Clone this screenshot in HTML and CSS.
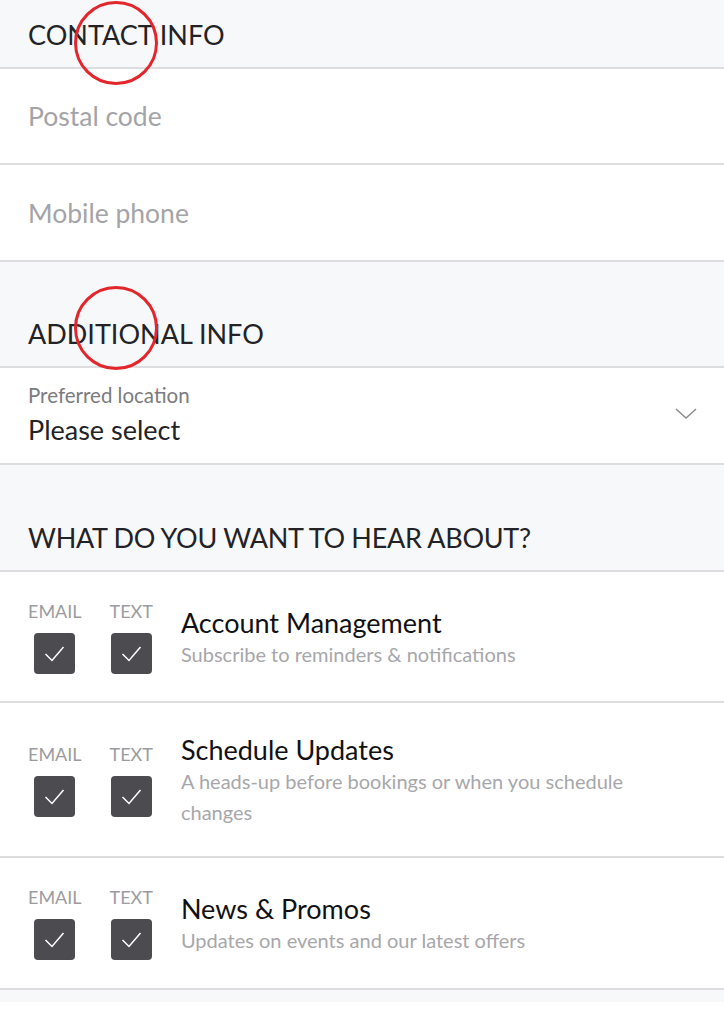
FILE: index.html
```html
<!DOCTYPE html>
<html lang="en">
<head>
    <meta charset="UTF-8">
    <meta name="viewport" content="width=device-width, initial-scale=1.0">
    <title>Profile - Contact preferences</title>
    <link rel="stylesheet" href="styles.css">
</head>
<body>
    <main class="form">
        <div class="section-title first">
            <h2>CONTACT INFO</h2>
            <span class="mark"></span>
        </div>
        <div class="field">
            <input type="text" placeholder="Postal code">
        </div>
        <div class="field tall">
            <input type="text" placeholder="Mobile phone">
        </div>

        <div class="section-title">
            <h2>ADDITIONAL INFO</h2>
            <span class="mark"></span>
        </div>
        <div class="field select">
            <div>
                <label>Preferred location</label>
                <div class="value">Please select</div>
            </div>
            <svg class="chevron" width="22" height="12" viewBox="0 0 22 12">
                <path d="M1 1 L11 10 L21 1" fill="none" stroke="#8a8a8e" stroke-width="1.4"/>
            </svg>
        </div>

        <div class="section-title wide">
            <h2>WHAT DO YOU WANT TO HEAR ABOUT?</h2>
        </div>

        <!-- subscription rows -->
        <div class="pref">
            <div class="checks">
                <div class="check-col">
                    <span>EMAIL</span>
                    <div class="box"><svg viewBox="0 0 41 41"><path d="M11.5 21 L18 27.5 L29.5 14"/></svg></div>
                </div>
                <div class="check-col">
                    <span>TEXT</span>
                    <div class="box"><svg viewBox="0 0 41 41"><path d="M11.5 21 L18 27.5 L29.5 14"/></svg></div>
                </div>
            </div>
            <div class="pref-text">
                <h3>Account Management</h3>
                <p>Subscribe to reminders &amp; notifications</p>
            </div>
        </div>
        <div class="pref">
            <div class="checks">
                <div class="check-col">
                    <span>EMAIL</span>
                    <div class="box"><svg viewBox="0 0 41 41"><path d="M11.5 21 L18 27.5 L29.5 14"/></svg></div>
                </div>
                <div class="check-col">
                    <span>TEXT</span>
                    <div class="box"><svg viewBox="0 0 41 41"><path d="M11.5 21 L18 27.5 L29.5 14"/></svg></div>
                </div>
            </div>
            <div class="pref-text">
                <h3>Schedule Updates</h3>
                <p>A heads-up before bookings or when you schedule changes</p>
            </div>
        </div>
        <div class="pref last">
            <div class="checks">
                <div class="check-col">
                    <span>EMAIL</span>
                    <div class="box"><svg viewBox="0 0 41 41"><path d="M11.5 21 L18 27.5 L29.5 14"/></svg></div>
                </div>
                <div class="check-col">
                    <span>TEXT</span>
                    <div class="box"><svg viewBox="0 0 41 41"><path d="M11.5 21 L18 27.5 L29.5 14"/></svg></div>
                </div>
            </div>
            <div class="pref-text">
                <h3>News &amp; Promos</h3>
                <p>Updates on events and our latest offers</p>
            </div>
        </div>
        <div class="bottom-band"></div>
    </main>
</body>
</html>
```

FILE: styles.css
```css
* {
    margin: 0;
    padding: 0;
    box-sizing: border-box;
}

body {
    font-family: Lato, "Open Sans", sans-serif;
    background: white;
    color: #222226;
}

.form {
    display: flex;
    flex-direction: column;
}

.section-title {
    position: relative;
    background: #f7f8fa;
    padding: 55px 28px 15px;
    border-bottom: 2px solid #dddde0;
}

.section-title.first {
    padding: 18px 28px 15px;
}

.section-title.wide {
    padding-top: 56px;
}

.section-title h2 {
    font-size: 27px;
    font-weight: 400;
    line-height: 34px;
    color: #232327;
}

.section-title.wide h2 {
    letter-spacing: -0.3px;
}

/* red annotation ring over the heading */
.mark {
    position: absolute;
    left: 74px;
    bottom: -4px;
    width: 84px;
    height: 84px;
    border: 3px solid #e3262b;
    border-radius: 50%;
}

.section-title.first .mark {
    top: 1px;
    bottom: auto;
}

.field {
    display: flex;
    align-items: center;
    justify-content: space-between;
    height: 96px;
    padding: 0 28px;
    border-bottom: 2px solid #dddde0;
    background: white;
}

.field.tall {
    height: 97px;
}

.field input {
    border: none;
    outline: none;
    background: none;
    width: 100%;
    font-family: Lato, sans-serif;
    font-size: 26.5px;
    color: #222;
}

.field input::placeholder {
    color: #a4a4a8;
}

.field.select {
    height: 97px;
    padding-right: 27px;
}

.field label {
    display: block;
    font-size: 20.5px;
    line-height: 24px;
    color: #7b7b80;
    margin-top: -2px;
}

.field .value {
    font-size: 27px;
    line-height: 34px;
    margin-top: 6px;
    color: #232327;
}

.chevron {
    margin-top: -4px;
}

.pref {
    display: flex;
    align-items: center;
    padding: 28px 28px 27px;
    border-bottom: 2px solid #dddde0;
    background: white;
}

.pref.last {
    padding-bottom: 28px;
}

.checks {
    display: flex;
    gap: 28px;
    flex-shrink: 0;
}

.check-col {
    display: flex;
    flex-direction: column;
    align-items: center;
    gap: 11px;
}

.check-col span {
    font-size: 18px;
    line-height: 22px;
    color: #9c9ca0;
}

.box {
    width: 41px;
    height: 41px;
    background: #4b4b50;
    border-radius: 4px;
}

.box svg {
    width: 41px;
    height: 41px;
    display: block;
}

.box path {
    fill: none;
    stroke: white;
    stroke-width: 1.5;
}

.pref-text {
    margin-left: 28px;
    padding: 2px 60px 1px 0;
}

.pref-text h3 {
    font-size: 27px;
    font-weight: 400;
    line-height: 33px;
    color: #111114;
}

.pref-text p {
    font-size: 20px;
    line-height: 31px;
    color: #a7a7ab;
}

.bottom-band {
    height: 12px;
    background: #f7f8fa;
}
```
